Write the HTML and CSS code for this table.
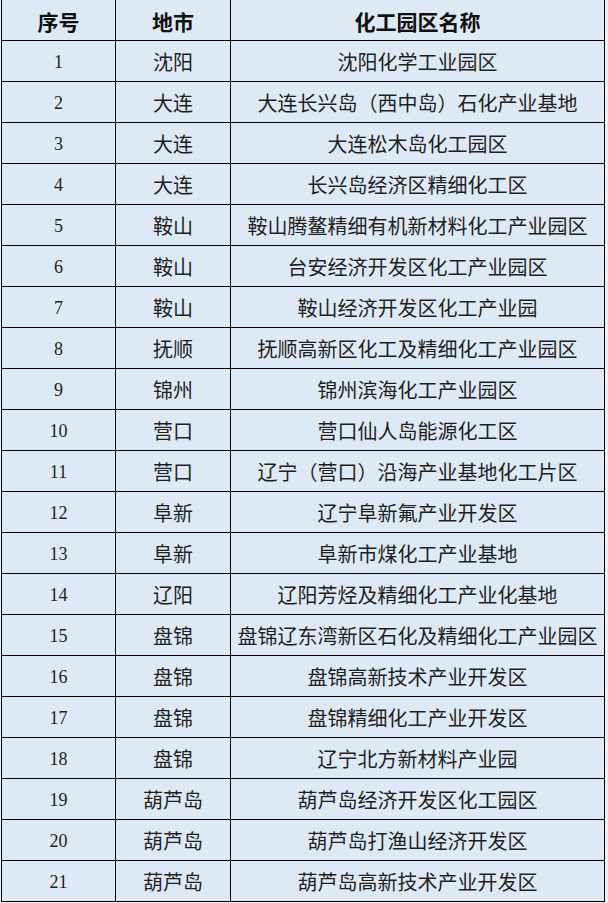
FILE: index.html
```html
<!DOCTYPE html>
<html lang="zh-CN">
<head>
<meta charset="utf-8">
<title>化工园区名称</title>
<link rel="stylesheet" href="styles.css">
</head>
<body>
<div class="page">
<table class="parks">
<colgroup><col class="c-no"><col class="c-city"><col class="c-name"></colgroup>
<thead>
<tr><th>序号</th><th>地市</th><th>化工园区名称</th></tr>
</thead>
<tbody>
<tr><td class="num">1</td><td>沈阳</td><td>沈阳化学工业园区</td></tr>
<tr><td class="num">2</td><td>大连</td><td>大连长兴岛（西中岛）石化产业基地</td></tr>
<tr><td class="num">3</td><td>大连</td><td>大连松木岛化工园区</td></tr>
<tr><td class="num">4</td><td>大连</td><td>长兴岛经济区精细化工区</td></tr>
<tr><td class="num">5</td><td>鞍山</td><td>鞍山腾鳌精细有机新材料化工产业园区</td></tr>
<tr><td class="num">6</td><td>鞍山</td><td>台安经济开发区化工产业园区</td></tr>
<tr><td class="num">7</td><td>鞍山</td><td>鞍山经济开发区化工产业园</td></tr>
<tr><td class="num">8</td><td>抚顺</td><td>抚顺高新区化工及精细化工产业园区</td></tr>
<tr><td class="num">9</td><td>锦州</td><td>锦州滨海化工产业园区</td></tr>
<tr><td class="num">10</td><td>营口</td><td>营口仙人岛能源化工区</td></tr>
<tr><td class="num">11</td><td>营口</td><td>辽宁（营口）沿海产业基地化工片区</td></tr>
<tr><td class="num">12</td><td>阜新</td><td>辽宁阜新氟产业开发区</td></tr>
<tr><td class="num">13</td><td>阜新</td><td>阜新市煤化工产业基地</td></tr>
<tr><td class="num">14</td><td>辽阳</td><td>辽阳芳烃及精细化工产业化基地</td></tr>
<tr><td class="num">15</td><td>盘锦</td><td>盘锦辽东湾新区石化及精细化工产业园区</td></tr>
<tr><td class="num">16</td><td>盘锦</td><td>盘锦高新技术产业开发区</td></tr>
<tr><td class="num">17</td><td>盘锦</td><td>盘锦精细化工产业开发区</td></tr>
<tr><td class="num">18</td><td>盘锦</td><td>辽宁北方新材料产业园</td></tr>
<tr><td class="num">19</td><td>葫芦岛</td><td>葫芦岛经济开发区化工园区</td></tr>
<tr><td class="num">20</td><td>葫芦岛</td><td>葫芦岛打渔山经济开发区</td></tr>
<tr><td class="num">21</td><td>葫芦岛</td><td>葫芦岛高新技术产业开发区</td></tr>
</tbody>
</table>
</div>
</body>
</html>
```

FILE: styles.css
```css
html, body {
  margin: 0;
  padding: 0;
  background: #eaf1f9;
}
.page {
  width: 608px;
  height: 903px;
  overflow: hidden;
  padding-left: 1px;
  box-sizing: border-box;
}
.parks {
  border-collapse: collapse;
  table-layout: fixed;
  width: 603px;
  background: #dde9f5;
  font-family: "Noto Sans CJK SC", "Liberation Serif", sans-serif;
  color: #1f1f1f;
}
.c-no { width: 114px; }
.c-city { width: 115px; }
.c-name { width: 374px; }
.parks th,
.parks td {
  border: 1px solid #000;
  height: 38px;
  padding: 2px 0 0;
  text-align: center;
  vertical-align: middle;
  font-size: 20px;
  font-weight: 400;
  line-height: 22px;
  white-space: nowrap;
}
.parks thead th {
  border-top: none;
  font-weight: 700;
  font-size: 21px;
  color: #111;
}
.parks td.num {
  font-family: "Liberation Serif", serif;
  font-size: 18px;
}
```
